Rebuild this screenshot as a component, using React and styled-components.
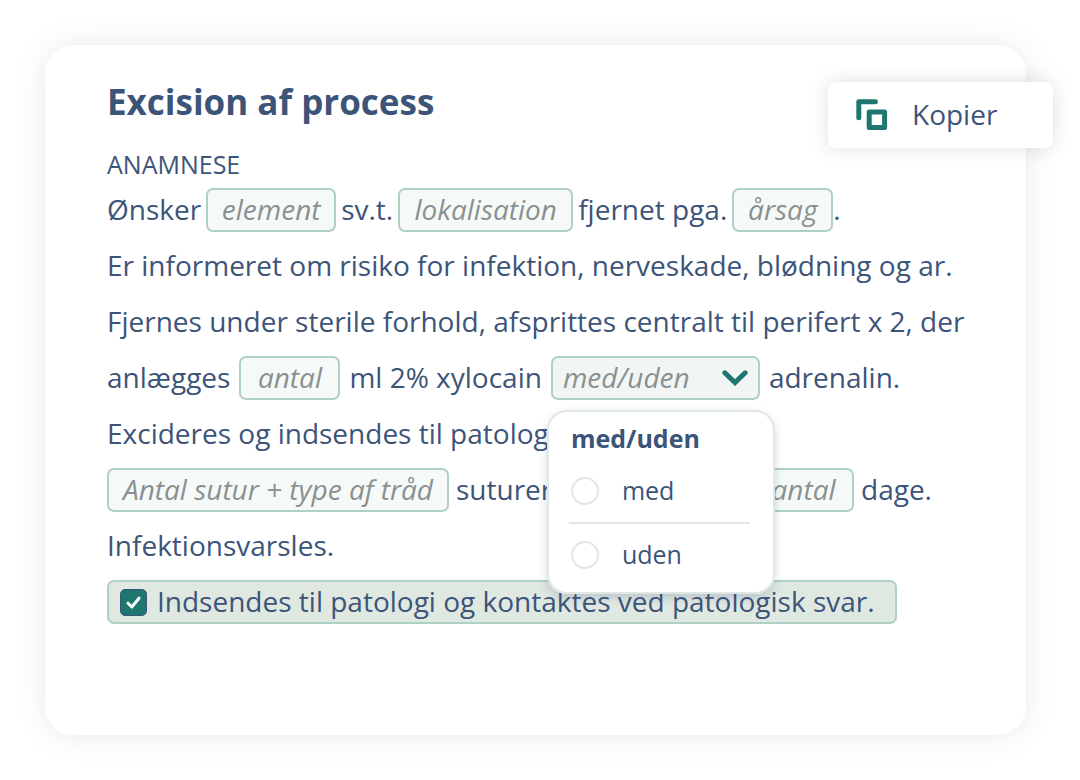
import React, { useState } from "react";
import styled, { createGlobalStyle, css } from "styled-components";

const colors = {
    text: "#3d5479",
    muted: "#8a908f",
    teal: "#1d7770",
    border: "#afd0c5",
    line: "#dfe8e4",
    field: "#f5faf9",
    select: "#f1f6f5",
    checked: "#e0e8e2",
};

const GlobalStyle = createGlobalStyle`
    *, *::before, *::after {
        box-sizing: border-box;
    }

    body {
        margin: 0;
        background: #fff;
        color: ${colors.text};
        font-family: "Open Sans", "Noto Sans", sans-serif;
        font-size: 28px;
    }
`;

const Page = styled.main`
    display: flex;
    min-height: 100vh;
    padding: 45px 54px 45px 45px;
`;

const Card = styled.section`
    position: relative;
    flex: 1;
    min-width: 0;
    padding: 33px 24px 32px 62px;
    border-radius: 28px;
    background: #fff;
    box-shadow: 0 0 30px rgba(60, 90, 85, 0.13);
`;

const Title = styled.h1`
    margin: 0 0 22px;
    font-size: 35px;
    line-height: 48px;
    font-weight: 700;
`;

const Subtitle = styled.h2`
    margin: 0 0 2px;
    font-size: 25px;
    line-height: 32px;
    font-weight: 500;
    text-transform: uppercase;
`;

const CopyButton = styled.button`
    position: absolute;
    top: 37px;
    right: -27px;
    display: flex;
    align-items: center;
    gap: 24px;
    width: 225px;
    height: 66px;
    padding: 0 28px;
    border: 0;
    border-radius: 8px;
    background: #fff;
    box-shadow: 0 0 20px rgba(60, 90, 85, 0.18);
    color: inherit;
    font: inherit;
    cursor: pointer;
`;

const Row = styled.div`
    display: flex;
    flex-wrap: wrap;
    align-items: center;
    column-gap: ${({ $gap }) => $gap || 7}px;
    min-height: 56px;
`;

const Text = styled.span`
    min-width: ${({ $min }) => $min || 0}px;
    line-height: 40px;
    padding-bottom: 2px;
`;

const Group = styled.span`
    display: flex;
    align-items: center;
`;

const fieldBox = css`
    height: 44px;
    border: 2px solid ${colors.border};
    border-radius: 7px;
`;

const Field = styled.input`
    ${fieldBox}
    width: ${({ $width }) => $width}px;
    padding: 0 10px 2px;
    background: ${colors.field};
    color: ${colors.text};
    font: inherit;
    font-style: italic;
    text-align: center;

    &::placeholder {
        color: ${colors.muted};
        opacity: 1;
    }
`;

const SelectWrapper = styled.div`
    position: relative;
    width: 209px;
    height: 44px;
`;

const Select = styled.select`
    ${fieldBox}
    width: 100%;
    padding: 0 48px 2px 10px;
    appearance: none;
    background: ${colors.select};
    color: ${colors.muted};
    font: inherit;
    font-style: italic;
`;

const Chevron = styled.svg`
    position: absolute;
    top: 14px;
    right: 12px;
    pointer-events: none;
`;

const Popover = styled.fieldset`
    position: absolute;
    z-index: 2;
    top: 54px;
    left: -4px;
    width: 228px;
    margin: 0;
    padding: 8px 23px 6px 20px;
    border: 2px solid ${colors.line};
    border-radius: 20px;
    background: #fff;
    box-shadow: 0 4px 10px rgba(61, 84, 121, 0.22);
    font-size: 25px;
`;

const PopoverTitle = styled.div`
    margin-bottom: 4px;
    padding-left: 2px;
    line-height: 36px;
    font-weight: 700;
`;

const Option = styled.label`
    display: flex;
    align-items: center;
    gap: 23px;
    height: 62px;
    padding-left: 2px;
    cursor: pointer;

    & + & {
        height: 64px;
        border-top: 2px solid ${colors.line};
    }
`;

const Radio = styled.input`
    appearance: none;
    width: 28px;
    height: 28px;
    margin: 0;
    border: 2px solid ${colors.line};
    border-radius: 50%;
    background: #fff;

    &:checked {
        border: 8px solid ${colors.teal};
    }
`;

const CheckRow = styled.label`
    ${fieldBox}
    display: flex;
    align-items: center;
    gap: 10px;
    width: 790px;
    padding: 0 11px;
    background: ${colors.checked};
    cursor: pointer;
`;

const CheckWrapper = styled.span`
    position: relative;
    display: flex;
`;

const Checkbox = styled.input`
    appearance: none;
    width: 27px;
    height: 27px;
    margin: 0;
    border: 1px solid ${colors.text};
    border-radius: 5px;
    background: #fff;

    &:checked {
        background: ${colors.teal};
    }
`;

const Tick = styled.svg`
    position: absolute;
    inset: 0;
    pointer-events: none;
`;

const CopyIcon = () => (
    <svg width="32" height="32" viewBox="0 0 32 32" fill="none" stroke={colors.teal} strokeWidth="5" strokeLinejoin="round" strokeLinecap="round">
        <path d="M2.8 18.8V2.8H19.4" />
        <rect x="13.2" y="13" width="15.4" height="15.4" />
    </svg>
);

const Choice = () => {
    const [value, setValue] = useState("");
    return (
        <SelectWrapper>
            <Select aria-label="med/uden" value={value} onChange={(e) => setValue(e.target.value)}>
                <option value="" hidden>med/uden</option>
                <option value="med">med</option>
                <option value="uden">uden</option>
            </Select>
            <Chevron width="26" height="16" viewBox="0 0 26 16" fill="none">
                <path d="M2.8 2.8L13 12.6L23.2 2.8" stroke={colors.teal} strokeWidth="5" strokeLinecap="round" />
            </Chevron>
            <Popover aria-label="med/uden">
                <PopoverTitle>med/uden</PopoverTitle>
                {["med", "uden"].map((name) => (
                    <Option key={name}>
                        <Radio type="radio" name="adrenalin" checked={value === name} onChange={() => setValue(name)} />
                        <Text>{name}</Text>
                    </Option>
                ))}
            </Popover>
        </SelectWrapper>
    );
};

const Blank = ({ name, width }) => (
    <Field type="text" aria-label={name} placeholder={name} $width={width} />
);

const App = () => {
    return (
        <Page>
            <GlobalStyle />
            <Card>
                <Title>Excision af process</Title>
                <CopyButton type="button">
                    <CopyIcon />
                    <Text>Kopier</Text>
                </CopyButton>

                <Subtitle>Anamnese</Subtitle>
                <Row $gap={5}>
                    <Text>Ønsker</Text>
                    <Blank name="element" width={130} />
                    <Text>sv.t.</Text>
                    <Blank name="lokalisation" width={175} />
                    <Text>fjernet pga.</Text>
                    <Group>
                        <Blank name="årsag" width={101} />
                        <Text>.</Text>
                    </Group>
                </Row>
                <Row>
                    <Text>Er informeret om risiko for infektion, nerveskade, blødning og ar.</Text>
                </Row>
                <Row>
                    <Text>Fjernes under sterile forhold, afsprittes centralt til perifert x 2, der</Text>
                </Row>
                <Row $gap={9}>
                    <Text>anlægges</Text>
                    <Blank name="antal" width={101} />
                    <Text>ml 2% xylocain</Text>
                    <Choice />
                    <Text>adrenalin.</Text>
                </Row>
                <Row>
                    <Text>Excideres og indsendes til patologi.</Text>
                </Row>
                <Row>
                    <Blank name="Antal sutur + type af tråd" width={342} />
                    <Text $min={290}>suturer</Text>
                    <Blank name="antal" width={101} />
                    <Text>dage.</Text>
                </Row>
                <Row>
                    <Text>Infektionsvarsles.</Text>
                </Row>
                <Row>
                    <CheckRow>
                        <CheckWrapper>
                            <Checkbox type="checkbox" defaultChecked />
                            <Tick width="27" height="27" viewBox="0 0 27 27" fill="none">
                                <path d="M8 14.2L11.8 18L19 9.2" stroke="#fff" strokeWidth="3" strokeLinecap="round" strokeLinejoin="round" />
                            </Tick>
                        </CheckWrapper>
                        <Text>Indsendes til patologi og kontaktes ved patologisk svar.</Text>
                    </CheckRow>
                </Row>
            </Card>
        </Page>
    );
};

export default App;
